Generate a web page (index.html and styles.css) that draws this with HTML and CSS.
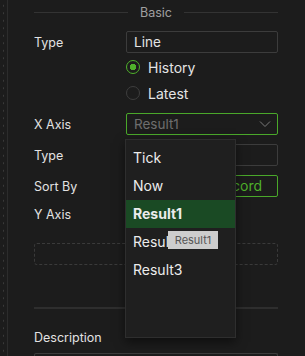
FILE: index.html
```html
<!DOCTYPE html>
<html lang="en">
<head>
    <meta charset="UTF-8">
    <meta name="viewport" content="width=device-width, initial-scale=1.0">
    <title>Chart Settings</title>
    <link rel="stylesheet" href="styles.css">
</head>
<body>
    <div class="layout">
        <div class="gutter"></div>
        <div class="panel">
            <div class="section-title">
                <span class="rule"></span>
                <span class="section-name">Basic</span>
                <span class="rule"></span>
            </div>

            <div class="row">
                <label class="label">Type</label>
                <div class="input">Line</div>
            </div>

            <div class="radio-group">
                <div class="radio">
                    <span class="radio-dot checked"></span>
                    <span>History</span>
                </div>
                <div class="radio">
                    <span class="radio-dot"></span>
                    <span>Latest</span>
                </div>
            </div>

            <div class="row axis-row">
                <label class="label">X Axis</label>
                <div class="select-wrap">
                    <div class="select">
                        <span class="placeholder">Result1</span>
                        <svg class="chevron" width="12" height="8" viewBox="0 0 12 8">
                            <path d="M1 1.5 L6 6.5 L11 1.5" fill="none" stroke="#7a7a7a" stroke-width="1"/>
                        </svg>
                    </div>
                    <div class="dropdown">
                        <div class="option">Tick</div>
                        <div class="option">Now</div>
                        <div class="option selected">Result1</div>
                        <div class="option">Result2
                            <span class="tooltip">Result1</span>
                        </div>
                        <div class="option">Result3</div>
                    </div>
                </div>
            </div>

            <div class="row">
                <label class="label">Type</label>
                <div class="input"></div>
            </div>

            <div class="row">
                <label class="label">Sort By</label>
                <div class="button-green">Select Record</div>
            </div>

            <div class="row label-only">
                <label class="label">Y Axis</label>
            </div>

            <div class="dashed"></div>

            <div class="divider"></div>

            <div class="label desc-label">Description</div>
            <div class="input desc-input"></div>
        </div>
    </div>
</body>
</html>
```

FILE: styles.css
```css
body {
    margin: 0;
    background-color: #1c1c1c;
    color: #e4e4e4;
    font-family: Inter, "Noto Sans", sans-serif;
    font-size: 13px;
    overflow: hidden;
}

.layout {
    display: flex;
    height: 356px;
    overflow: hidden;
}

.gutter {
    width: 7px;
    border-right: 1px solid #2c2c2c;
    background-image: radial-gradient(circle, #3a3a3a 0.8px, transparent 1px);
    background-size: 7px 7.5px;
    background-position: 0 2px;
}

.panel {
    flex: 1;
    padding: 4px 27px 0 26px;
}

.section-title {
    display: flex;
    align-items: center;
    gap: 12px;
    height: 16px;
    margin-bottom: 11px;
}

.rule {
    flex: 1;
    height: 1px;
    background-color: #333;
}

.section-name {
    color: #a0a0a0;
    font-size: 12.5px;
}

.row {
    display: grid;
    grid-template-columns: 92px 1fr;
    align-items: center;
    margin-bottom: 9px;
}

.label {
    font-size: 12.5px;
    color: #e2e2e2;
}

.input {
    box-sizing: border-box;
    height: 22px;
    border: 1px solid #3c3c3c;
    border-radius: 2px;
    padding: 0 7px;
    line-height: 20px;
    font-size: 13.5px;
}

.desc-input {
    height: 10px;
    border-bottom: none;
}

.radio-group {
    margin: -8px 0 7px 92px;
}

.radio {
    display: flex;
    align-items: center;
    gap: 8px;
    height: 26px;
    font-size: 14px;
}

.radio-dot {
    box-sizing: border-box;
    width: 14px;
    height: 14px;
    border: 1px solid #3e3e3e;
    border-radius: 50%;
}

.radio-dot.checked {
    border: 1.5px solid #4fb22b;
    background: radial-gradient(circle, #4fb22b 3px, transparent 3.5px);
}

.select-wrap {
    position: relative;
}

.select {
    box-sizing: border-box;
    height: 22px;
    border: 1.5px solid #4aa82a;
    border-radius: 2px;
    display: flex;
    align-items: center;
    justify-content: space-between;
    padding: 0 6px 0 7px;
    font-size: 13.5px;
}

.placeholder {
    color: #6e6e6e;
}

.dropdown {
    position: absolute;
    left: -1px;
    top: 26px;
    width: 111px;
    height: 199px;
    box-sizing: border-box;
    padding-top: 4px;
    background-color: #1f1f1f;
    border: 1px solid #2e2e2e;
    box-shadow: 0 4px 10px rgba(0, 0, 0, 0.5);
    z-index: 2;
}

.option {
    position: relative;
    height: 28px;
    line-height: 28px;
    padding-left: 7px;
    font-size: 14px;
    color: #ececec;
}

.option.selected {
    background-color: #1a4a24;
    font-weight: 700;
}

.tooltip {
    position: absolute;
    left: 42px;
    top: 3px;
    width: 50px;
    height: 18px;
    line-height: 18px;
    text-align: center;
    background-color: #cdcdcd;
    color: #555;
    font-size: 11px;
    font-weight: 400;
}

.button-green {
    box-sizing: border-box;
    height: 22px;
    border: 1px solid #4aa82a;
    border-radius: 2px;
    color: #4fb22b;
    text-align: right;
    line-height: 20px;
    font-size: 14px;
    padding-right: 15px;
}

.label-only {
    height: 16px;
    margin-bottom: 21px;
}

.dashed {
    height: 22px;
    box-sizing: border-box;
    border: 1px dashed #3a3a3a;
    border-radius: 3px;
    margin-bottom: 42px;
}

.divider {
    height: 2px;
    background-color: #2e2e2e;
    margin-bottom: 21px;
}

.desc-label {
    height: 16px;
    line-height: 16px;
    margin-bottom: 7px;
}
```
